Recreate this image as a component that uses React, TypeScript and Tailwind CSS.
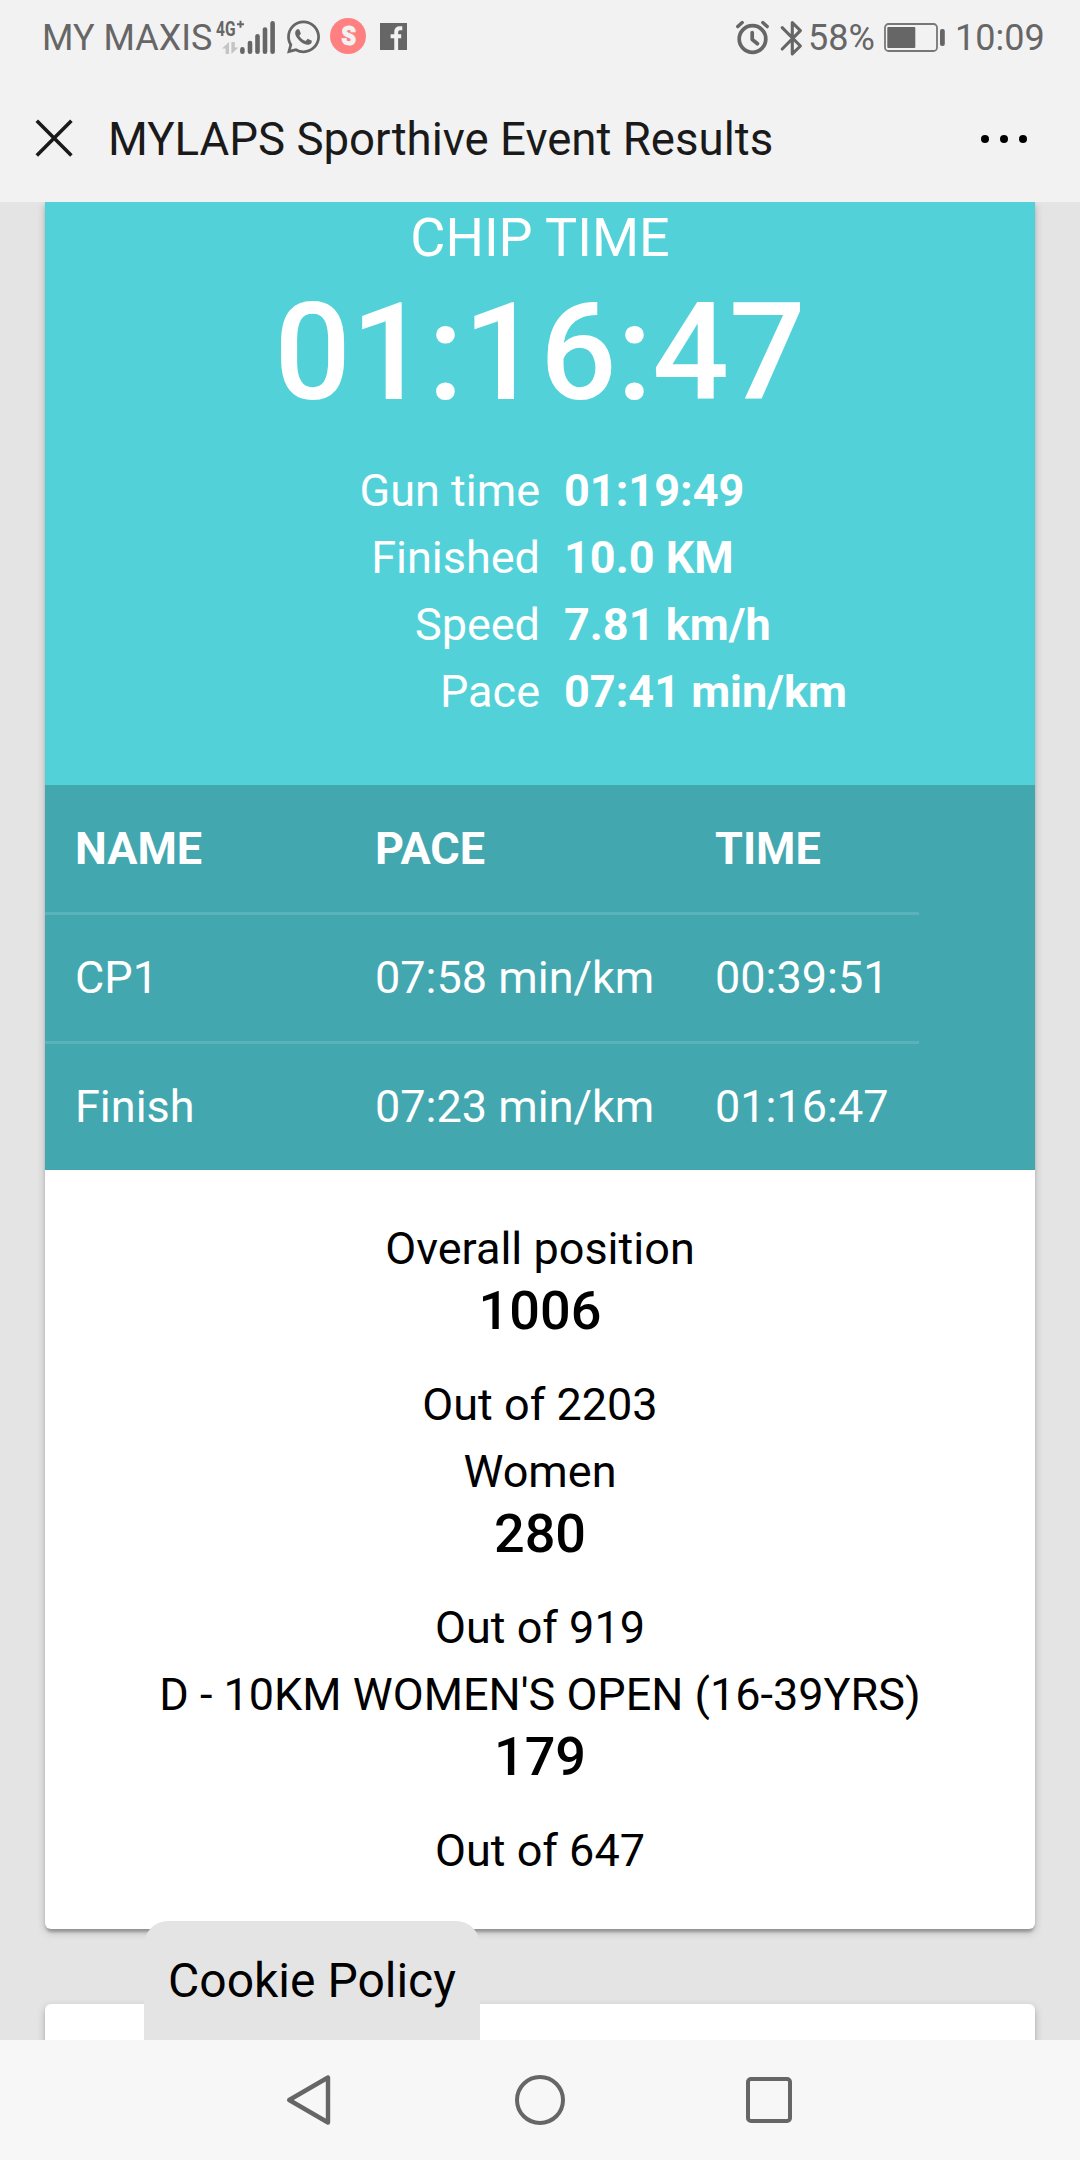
import type { ReactNode } from "react";
import { FaWhatsapp } from "react-icons/fa";

interface Stat {
  label: string;
  value: string;
}

interface Ranking {
  title: string;
  position: string;
  total: string;
}

const stats: Stat[] = [
  { label: "Gun time", value: "01:19:49" },
  { label: "Finished", value: "10.0 KM" },
  { label: "Speed", value: "7.81 km/h" },
  { label: "Pace", value: "07:41 min/km" },
];

const splits = [
  { name: "CP1", pace: "07:58 min/km", time: "00:39:51" },
  { name: "Finish", pace: "07:23 min/km", time: "01:16:47" },
];

const rankings: Ranking[] = [
  { title: "Overall position", position: "1006", total: "Out of 2203" },
  { title: "Women", position: "280", total: "Out of 919" },
  {
    title: "D - 10KM WOMEN'S OPEN (16-39YRS)",
    position: "179",
    total: "Out of 647",
  },
];

function SignalIcon() {
  return (
    <svg className="ml-[4px] h-[40px] w-[60px]" viewBox="215 16 60 40">
      <text
        x="216"
        y="34"
        fontSize="20"
        fontWeight="700"
        fill="#666"
        textLength="19.5"
        lengthAdjust="spacingAndGlyphs"
      >
        4G
      </text>
      <path d="M237 22.3h7M240.5 18.8v7" stroke="#666" strokeWidth="2" />
      <path d="M229 40v12h-3.4v-5.5h-3.6z" fill="#c4c4c4" />
      <path d="M231.4 52v-12h3.4v5.5h3.6z" fill="#c4c4c4" />
      <g stroke="#666" strokeWidth="4.6" strokeLinecap="round">
        <path d="M242.4 47.4v2.3" />
        <path d="M250 41v8.7" />
        <path d="M257.5 34.3v15.4" />
        <path d="M265 27.6v22.1" />
        <path d="M272.6 21.4v28.3" />
      </g>
    </svg>
  );
}

function StatusBar() {
  return (
    <div className="flex h-[76px] items-center text-[36px] leading-[42px] text-[#666]">
      <span className="ml-[42px] w-[169px] whitespace-nowrap">MY MAXIS</span>
      <SignalIcon />
      <FaWhatsapp className="mb-[3px] ml-[12px] h-[38px] w-[33px]" />
      <svg className="mb-[4px] ml-[10px] h-[36px] w-[36px]" viewBox="0 0 36 36">
        <circle cx="18" cy="18" r="18" fill="#ff8080" />
        <text
          x="18.7"
          y="27"
          fontSize="25"
          fontWeight="900"
          fill="#f2f2f2"
          stroke="#f2f2f2"
          strokeWidth="1"
          textAnchor="middle"
          textLength="14.5"
          lengthAdjust="spacingAndGlyphs"
        >
          S
        </text>
      </svg>
      <svg className="mb-[3px] ml-[14px] h-[27px] w-[27px]" viewBox="0 0 27 27">
        <rect width="27" height="27" fill="#666" />
        <path
          d="M22.3 5.2h-2.3q-3.8 0-3.8 3.8v18M10.6 13.2h10.6"
          fill="none"
          stroke="#f2f2f2"
          strokeWidth="3.9"
        />
      </svg>

      <svg
        className="ml-auto h-[36px] w-[36px]"
        viewBox="735 19 36 36"
        fill="none"
        stroke="#666"
        strokeLinecap="round"
        strokeLinejoin="round"
      >
        <circle cx="752.5" cy="38" r="13.3" strokeWidth="3.7" />
        <path d="M752.2 31.5v7l5.3 4.2" strokeWidth="3.7" />
        <path d="M737.8 25.6l4.4-4M767.2 25.6l-4.4-4" strokeWidth="3.4" />
      </svg>
      <svg
        className="ml-[8px] h-[36px] w-[26px]"
        viewBox="779 18 26 36"
        fill="none"
        stroke="#666"
        strokeWidth="3.1"
        strokeLinecap="round"
        strokeLinejoin="round"
      >
        <path d="M782.2 25.6l18.2 18.4-8.1 7.8V20.6l8.1 8-18.2 18.4" />
      </svg>
      <span className="ml-[3px] w-[68px] whitespace-nowrap">58%</span>
      <svg className="ml-[7px] h-[32px] w-[64px]" viewBox="883 22 64 32">
        <rect
          x="885"
          y="24"
          width="52"
          height="27"
          rx="3.5"
          fill="none"
          stroke="#777"
          strokeWidth="1.8"
        />
        <rect x="887.3" y="27" width="28" height="21" rx="1" fill="#666" />
        <rect x="940" y="29" width="4.8" height="17" rx="2" fill="#666" />
      </svg>
      <span className="mr-[36px] ml-[8px] w-[89px] whitespace-nowrap">
        10:09
      </span>
    </div>
  );
}

function TitleBar() {
  return (
    <div className="flex h-[126px] items-center">
      <svg className="mb-[2px] ml-[35px] h-[38px] w-[38px]" viewBox="0 0 38 38">
        <path
          d="M1.8 1.8l34.6 34.6M36.4 1.8l-34.6 34.6"
          stroke="#1a1a1a"
          strokeWidth="3.6"
        />
      </svg>
      <h1 className="ml-[35px] pt-[2px] text-[45.6px] leading-[54px] whitespace-nowrap text-[#1a1a1a]">
        MYLAPS Sporthive Event Results
      </h1>
      <div className="mr-[53px] ml-auto flex gap-[11px]">
        <span className="size-2 rounded-full bg-black" />
        <span className="size-2 rounded-full bg-black" />
        <span className="size-2 rounded-full bg-black" />
      </div>
    </div>
  );
}

function Card({
  className,
  children,
}: {
  className: string;
  children?: ReactNode;
}) {
  return (
    <section
      className={`mx-[45px] bg-white
        shadow-[0_3px_9px_rgba(0,0,0,0.2),0_3px_3px_rgba(0,0,0,0.14),0_6px_3px_-3px_rgba(0,0,0,0.12)]
        ${className}`}
    >
      {children}
    </section>
  );
}

function SplitTable() {
  return (
    <div className="bg-[#43a7b0] text-white">
      <div className="w-[874px] divide-y-3 divide-[#5bb2ba]">
        <div className="grid h-[130px] grid-cols-[300px_340px_234px] items-center font-bold">
          <span className="pl-[30px]">NAME</span>
          <span className="pl-[30px]">PACE</span>
          <span className="pl-[30px]">TIME</span>
        </div>
        {splits.map((split) => (
          <div
            key={split.name}
            className="grid h-[129px] grid-cols-[300px_340px_234px] items-center pb-px whitespace-nowrap last:h-[126px]"
          >
            <span className="pl-[30px]">{split.name}</span>
            <span className="pl-[30px]">{split.pace}</span>
            <span className="pl-[30px]">{split.time}</span>
          </div>
        ))}
      </div>
    </div>
  );
}

function NavBar() {
  return (
    <nav className="relative flex h-[120px] items-center justify-between bg-[#f7f7f7] pr-[288px] pl-[284px]">
      <svg className="h-[54px] w-[50px]" viewBox="284 2073 50 54">
        <path
          d="M328 2077.5v45l-38.8-22.5z"
          fill="none"
          stroke="#666"
          strokeWidth="4.4"
          strokeLinejoin="round"
        />
      </svg>
      <span className="size-[50px] rounded-full border-[4.5px] border-[#666]" />
      <span className="size-[46px] rounded-[5px] border-[4.5px] border-[#666]" />
    </nav>
  );
}

export default function App() {
  return (
    <div className="flex h-[2160px] w-[1080px] flex-col overflow-hidden bg-[#e4e4e4] font-[Roboto,sans-serif] text-black">
      <header className="relative z-10 bg-[#f2f2f2]">
        <StatusBar />
        <TitleBar />
      </header>

      <main className="relative h-[1838px] overflow-hidden text-[45px] leading-[67px]">
        <Card className="h-[1727px] overflow-hidden rounded-b-[6px]">
          <div className="bg-[#53d1d9] pb-[60px] text-white">
            <p className="text-center text-[54px] leading-[71px]">CHIP TIME</p>
            <p className="text-center text-[135px] leading-[160px] font-medium">
              01:16:47
            </p>
            <dl className="mt-[24px]">
              {stats.map((stat) => (
                <div key={stat.label} className="grid grid-cols-2">
                  <dt className="text-right">{stat.label}</dt>
                  <dd className="pl-[24px] font-bold">{stat.value}</dd>
                </div>
              ))}
            </dl>
          </div>

          <SplitTable />

          <div className="pt-[45px] text-center">
            {rankings.map((ranking) => (
              <div key={ranking.title}>
                <p>{ranking.title}</p>
                <p className="mb-[32px] text-[54px] leading-[57px] font-medium">
                  {ranking.position}
                </p>
                <p>{ranking.total}</p>
              </div>
            ))}
          </div>
        </Card>
        <Card className="mt-[75px] h-[120px] rounded-[6px]" />

        {/* Cookie tab sits over the cards */}
        <div className="absolute bottom-0 left-[144px] h-[119px] w-[336px] rounded-t-[24px] bg-[#e4e4e4] pt-[26px] text-center text-[48px] whitespace-nowrap">
          Cookie Policy
        </div>
      </main>

      <NavBar />
    </div>
  );
}
